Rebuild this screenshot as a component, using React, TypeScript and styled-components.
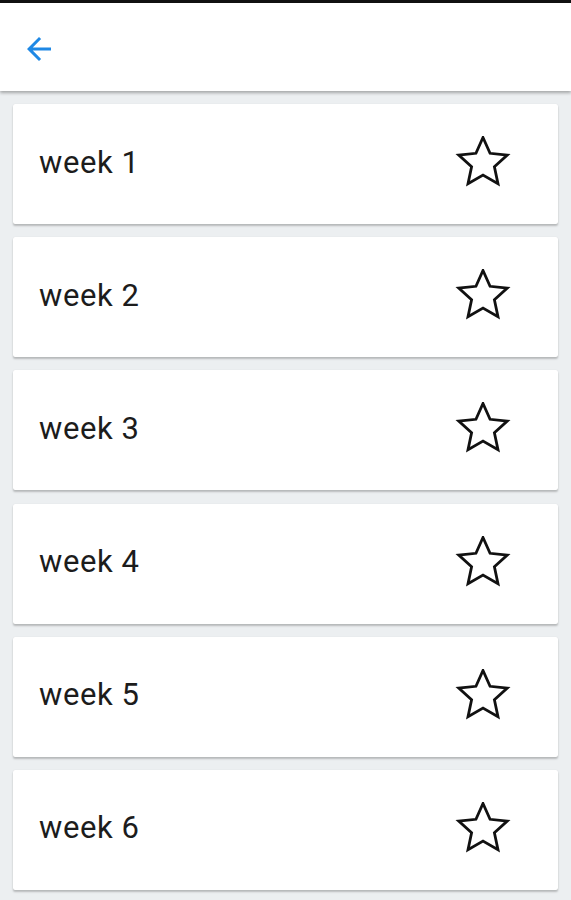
import styled, { createGlobalStyle } from 'styled-components'

const GlobalStyle = createGlobalStyle`
  html, body {
    margin: 0;
    padding: 0;
    background-color: #eceff1;
    font-family: Roboto, "Liberation Sans", sans-serif;
  }
`

const Page = styled.div`
  display: flex;
  flex-direction: column;
  min-height: 900px;
  border-top: 3px solid #111;
  background-color: #eceff1;
`

const Header = styled.header`
  display: flex;
  align-items: center;
  height: 88px;
  padding-left: 21px;
  background-color: #fff;
  box-shadow: 0 2px 3px rgba(0, 0, 0, 0.3);
  position: relative;
  z-index: 1;
`

const BackButton = styled.button`
  display: flex;
  align-items: center;
  justify-content: center;
  width: 36px;
  height: 36px;
  padding: 0;
  margin-top: 4px;
  border: none;
  background: none;
  color: #1e88e5;
  cursor: pointer;
`

const WeekList = styled.ul`
  display: flex;
  flex-direction: column;
  gap: 13.2px;
  margin: 0;
  padding: 13px 13px 0;
  list-style: none;
`

const WeekCard = styled.li`
  display: flex;
  align-items: center;
  justify-content: space-between;
  height: 120px;
  padding: 0 47px 0 26px;
  box-sizing: border-box;
  background-color: #fff;
  border-radius: 2px;
  box-shadow: 0 2px 2px rgba(0, 0, 0, 0.22), 0 0 1px rgba(0, 0, 0, 0.12);
`

const WeekLabel = styled.span`
  font-size: 31px;
  letter-spacing: 0.6px;
  color: #1c1c1c;
  margin-top: -4px;
`

const StarButton = styled.button`
  display: flex;
  padding: 0;
  border: none;
  background: none;
  cursor: pointer;
`

const weeks = [1, 2, 3, 4, 5, 6]

// regular five pointed star, outline only
const starPoints = (() => {
  const pts: string[] = []
  const cx = 28
  const cy = 27
  for (let i = 0; i < 10; i++) {
    const r = i % 2 === 0 ? 25.5 : 12
    const a = (Math.PI / 5) * i - Math.PI / 2
    pts.push(`${(cx + r * Math.cos(a)).toFixed(2)},${(cy + r * Math.sin(a)).toFixed(2)}`)
  }
  return pts.join(' ')
})()

const StarIcon = () => (
  <svg width="56" height="56" viewBox="0 0 56 56">
    <polygon points={starPoints} fill="none" stroke="#111" strokeWidth="2.8" strokeLinejoin="miter" />
  </svg>
)

const BackIcon = () => (
  <svg width="36" height="36" viewBox="0 0 24 24" fill="currentColor">
    <path d="M20 11H7.83l5.59-5.59L12 4l-8 8 8 8 1.41-1.41L7.83 13H20v-2z" />
  </svg>
)

export default function App () {
  return (
    <>
      <GlobalStyle />
      <Page>
        <Header>
          <BackButton aria-label="back">
            <BackIcon />
          </BackButton>
        </Header>
        <WeekList>
          {weeks.map((w) => (
            <WeekCard key={w}>
              <WeekLabel>week {w}</WeekLabel>
              <StarButton aria-label="favourite">
                <StarIcon />
              </StarButton>
            </WeekCard>
          ))}
        </WeekList>
      </Page>
    </>
  )
}
